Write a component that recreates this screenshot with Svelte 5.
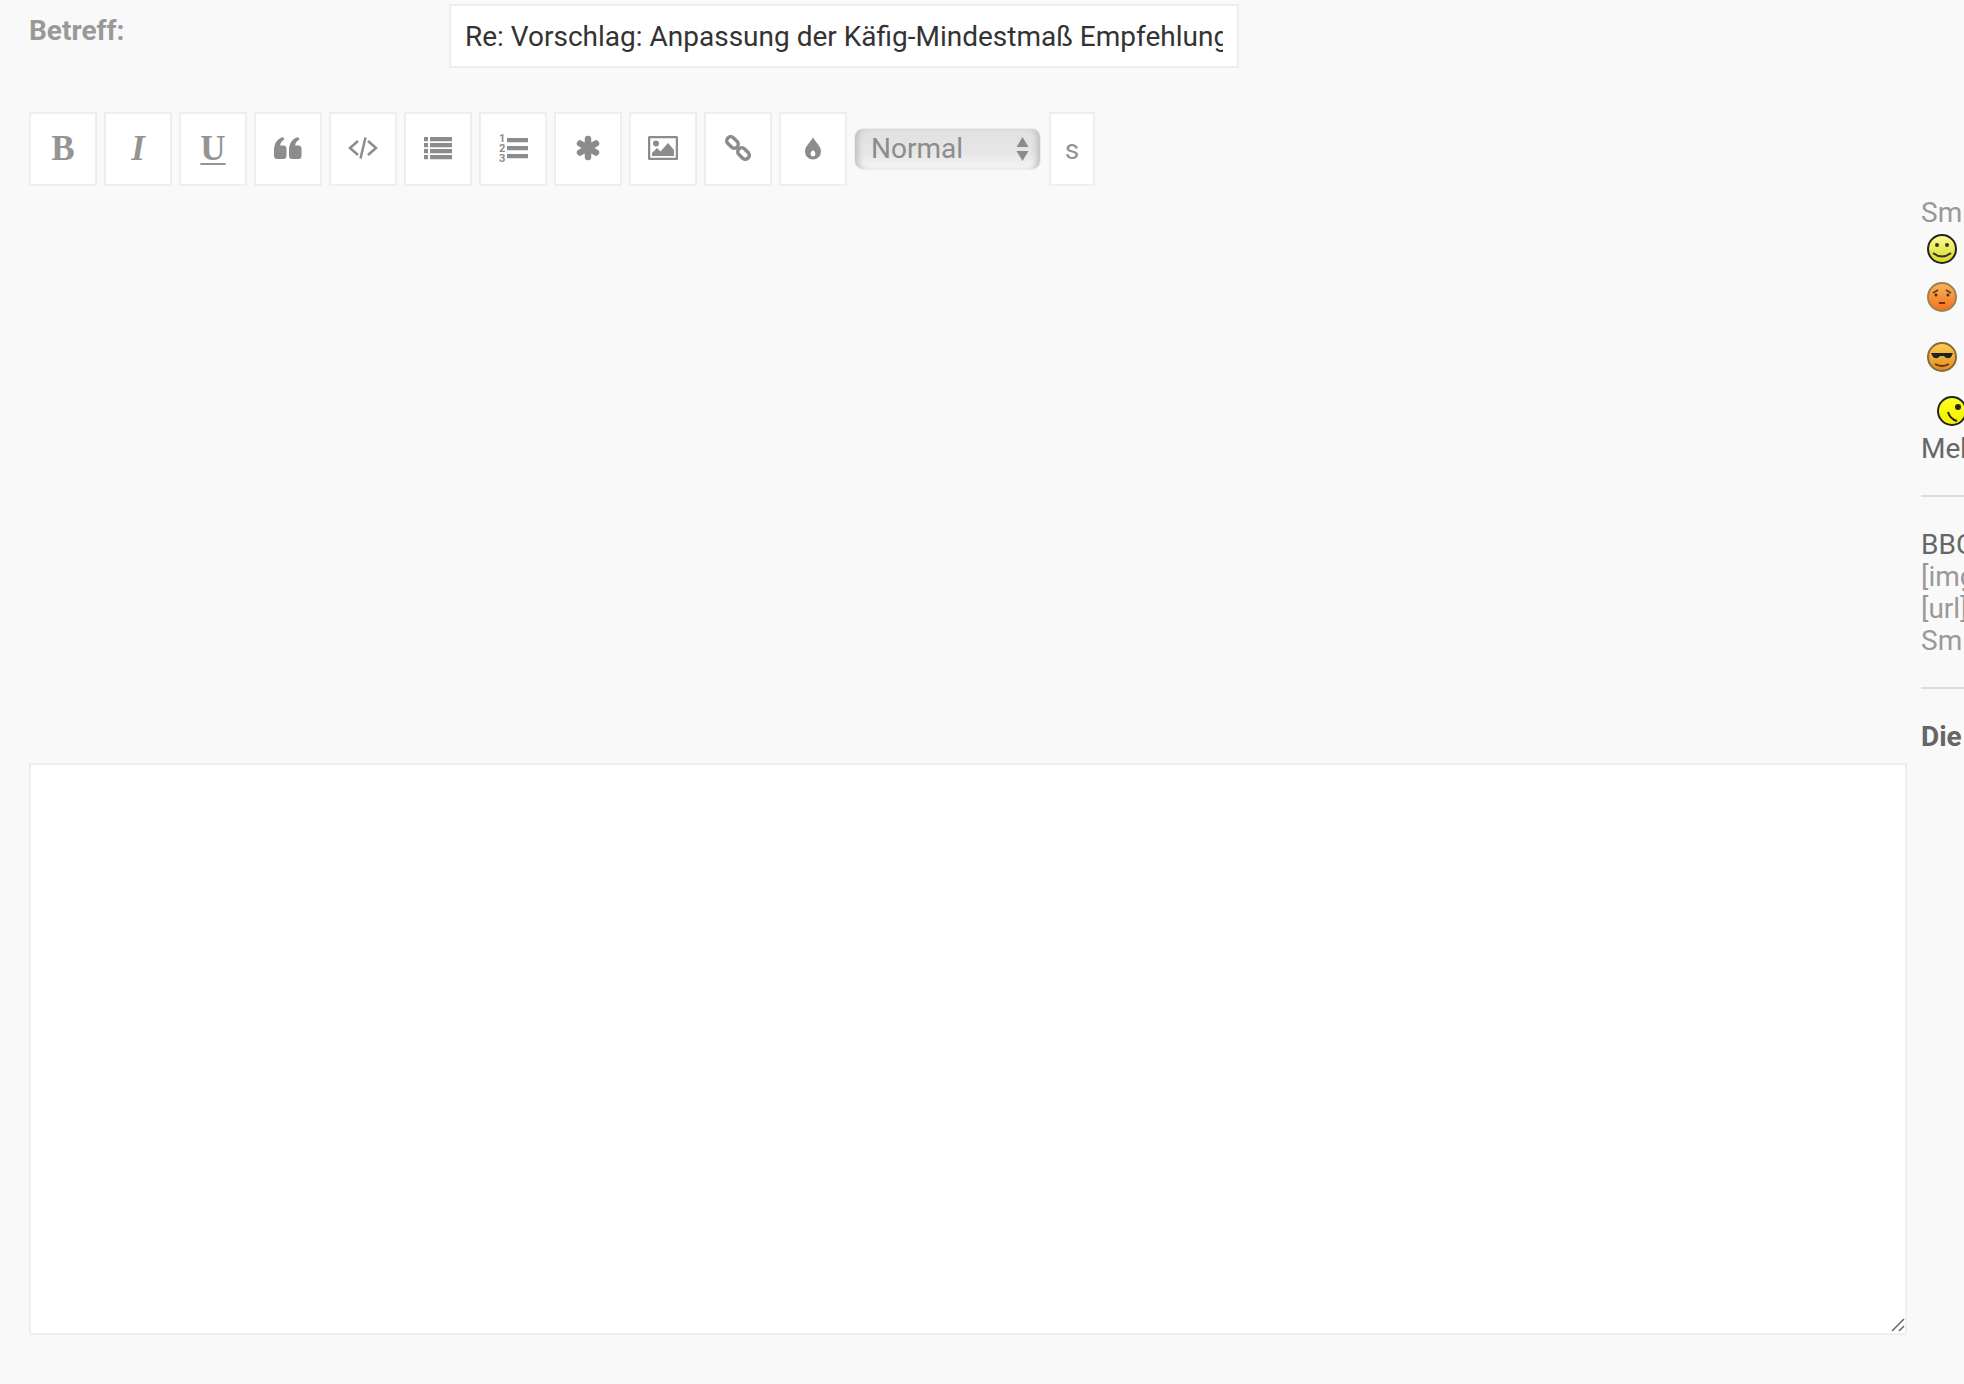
<script>
  let subject = "Re: Vorschlag: Anpassung der Käfig-Mindestmaß Empfehlung";
  let size = "Normal";
  const smilies = [
    { id: "smile", top: "#fdfd9a", bottom: "#d8d820", line: "#222" },
    { id: "sad", top: "#fdb45a", bottom: "#f0701a", line: "#a08050" },
    { id: "cool", top: "#fdd050", bottom: "#e08a20", line: "#8a6a3a" },
    { id: "lol", top: "#ffff20", bottom: "#f0f000", line: "#222" }
  ];
</script>

<div class="page">
  <div class="main">
    <div class="subject-row">
      <label class="subject-label" for="subject">Betreff:</label>
      <input id="subject" class="subject" type="text" bind:value={subject} />
    </div>

    <div class="toolbar">
      <button type="button" class="tool serif bold">B</button>
      <button type="button" class="tool serif italic">I</button>
      <button type="button" class="tool serif underline">U</button>
      <button type="button" class="tool" aria-label="Zitat">
        <svg width="28" height="24" viewBox="0 0 28 24"><path d="M0 14.500C0 7 3.500 2.500 9 1l1.500 2.500C7.500 5 6.300 7 6.200 9.500H9.500c1.700 0 3 1.300 3 3V20c0 1.700-1.300 3-3 3H3c-1.700 0-3-1.300-3-3zM15 14.500C15 7 18.500 2.500 24 1l1.500 2.500C22.500 5 21.300 7 21.200 9.500H24.500c1.700 0 3 1.300 3 3V20c0 1.700-1.300 3-3 3H18c-1.700 0-3-1.300-3-3z" /></svg>
      </button>
      <button type="button" class="tool" aria-label="Code">
        <svg width="30" height="24" viewBox="0 0 30 24"><path class="line" d="M10 5 2 12l8 7M20 5l8 7-8 7M17.500 1.500 12.500 22.500" /></svg>
      </button>
      <button type="button" class="tool" aria-label="Liste">
        <svg width="28" height="24" viewBox="0 0 28 24"><path d="M0 1h4v4.300H0zM6 1h22v4.300H6zM0 7h4v4.300H0zM6 7h22v4.300H6zM0 13h4v4.300H0zM6 13h22v4.300H6zM0 19h4v4.300H0zM6 19h22v4.300H6z" /></svg>
      </button>
      <button type="button" class="tool" aria-label="Nummerierte Liste">
        <svg width="30" height="30" viewBox="0 0 30 30"><text x="1" y="9" class="num">1</text><text x="1" y="19" class="num">2</text><text x="1" y="29" class="num">3</text><path d="M9 5h21v4.300H9zM9 13h21v4.300H9zM9 21h21v4.300H9z" /></svg>
      </button>
      <button type="button" class="tool" aria-label="Listenpunkt">
        <svg width="24" height="26" viewBox="0 0 24 26"><path class="star" d="M12 4v18M4 8.500l16 9M20 8.500l-16 9" /></svg>
      </button>
      <button type="button" class="tool" aria-label="Bild">
        <svg width="30" height="24" viewBox="0 0 30 24"><rect class="frame" x="1" y="1" width="28" height="22" rx="1.500" /><circle cx="8" cy="7.500" r="3" /><path d="M4 20v-3l5-5 3.500 3.500L20 7l6 7v6z" /></svg>
      </button>
      <button type="button" class="tool" aria-label="Link">
        <svg width="26" height="26" viewBox="0 0 26 26"><g class="chain"><rect x="1" y="3.500" width="13" height="8" rx="4" transform="rotate(45 7.500 7.500)" /><rect x="12" y="14.500" width="13" height="8" rx="4" transform="rotate(45 18.500 18.500)" /></g></svg>
      </button>
      <button type="button" class="tool" aria-label="Farbe">
        <svg width="18" height="24" viewBox="0 0 18 24"><path fill-rule="evenodd" d="M9 1c1.500 4.500 8 8.500 8 14.500a8 8 0 0 1-16 0C1 9.500 7.500 5.500 9 1zM9 14c-1.500 1.500-2.500 2.500-2.500 4a2.500 2.500 0 0 0 5 0c0-1.500-1-2.500-2.500-4z" /></svg>
      </button>
      <div class="select-wrap">
        <select class="size" bind:value={size}>
          <option>Klein</option>
          <option>Normal</option>
          <option>Groß</option>
        </select>
        <svg class="arrows" width="13" height="26" viewBox="0 0 13 26"><path d="M6.500 1l6 10H.5zM.5 15h12L6.500 25z" /></svg>
      </div>
      <button type="button" class="tool text-tool">s</button>
    </div>

    <div class="message-wrap">
      <textarea class="message"></textarea>
      <svg class="grip" width="14" height="14" viewBox="0 0 14 14"><path d="M1 13 13 1M8 13l5-5" /></svg>
    </div>
  </div>

  <aside class="side">
    <div class="muted">Smilies</div>
    <div class="smilies">
      {#each smilies as s}
        <svg class="smiley {s.id}" width="32" height="32" viewBox="0 0 32 32">
          <defs>
            <linearGradient id={s.id} x1="0" y1="0" x2="0" y2="1">
              <stop offset="0" stop-color={s.top} />
              <stop offset="1" stop-color={s.bottom} />
            </linearGradient>
          </defs>
          <circle cx="16" cy="16" r="14" fill="url(#{s.id})" stroke={s.line} stroke-width="2" />
          {#if s.id === "smile"}
            <circle cx="11" cy="12" r="2" fill="#333" />
            <circle cx="21" cy="12" r="2" fill="#333" />
            <path d="M7 20q9 7 18 0" fill="none" stroke="#333" stroke-width="2" />
          {:else if s.id === "sad"}
            <path d="M7 12l5-3M25 12l-5-3" stroke="#6a4020" stroke-width="2" />
            <circle cx="10" cy="14" r="1.500" fill="#333" />
            <circle cx="22" cy="14" r="1.500" fill="#333" />
            <path d="M13 22h6" stroke="#6a3010" stroke-width="2" />
          {:else if s.id === "cool"}
            <path d="M5 12h22l-2 4q-4 3-7-1h-4q-3 4-7 1z" fill="#222" />
            <path d="M9 23q7 4 14 0" fill="none" stroke="#6a3010" stroke-width="2" />
          {:else}
            <circle cx="22" cy="12" r="3" fill="#222" />
            <path d="M12 17q2 7 9 9" fill="none" stroke="#222" stroke-width="2" />
          {/if}
        </svg>
      {/each}
    </div>
    <div class="dark">Mehr Smilies</div>
    <hr />
    <div class="dark">BBCode ist eingeschaltet</div>
    <div class="muted">[img] ist eingeschaltet</div>
    <div class="muted">[url] ist eingeschaltet</div>
    <div class="muted">Smilies sind eingeschaltet</div>
    <hr />
    <div class="dark strong">Die Vorschau ist deaktiviert</div>
  </aside>
</div>

<style>
  :global(body) {
    margin: 0;
    background: #f9f9f9;
  }

  .page {
    display: flex;
    height: 1384px;
    width: 1964px;
    overflow: hidden;
    font-family: Roboto, "Liberation Sans", sans-serif;
    font-size: 28px;
    line-height: 32px;
    box-sizing: border-box;
    padding-left: 29px;
  }

  .main {
    width: 1878px;
    flex: none;
    display: flex;
    flex-direction: column;
  }

  .subject-row {
    display: flex;
    align-items: flex-start;
    padding-top: 4px;
  }

  .subject-label {
    width: 420px;
    font-weight: 700;
    color: #999;
    line-height: 54px;
  }

  .subject {
    width: 790px;
    height: 64px;
    box-sizing: border-box;
    border: 2px solid #eee;
    background: #fff;
    padding: 0 14px;
    font-family: inherit;
    font-size: 28px;
    color: #333;
    outline: none;
  }

  .toolbar {
    display: flex;
    align-items: center;
    gap: 7px;
    margin-top: 44px;
  }

  .tool {
    width: 68px;
    height: 74px;
    box-sizing: border-box;
    border: 2px solid #eee;
    background: #fff;
    padding: 0;
    display: flex;
    align-items: center;
    justify-content: center;
    color: #949494;
    fill: #8c8c8c;
    font-size: 35px;
  }

  .tool svg {
    margin-bottom: 3px;
  }

  .serif {
    font-family: "Liberation Serif", serif;
  }

  .bold {
    font-weight: 700;
  }

  .italic {
    font-style: italic;
    font-weight: 700;
  }

  .underline {
    font-weight: 700;
    text-decoration: underline;
    text-decoration-thickness: 2px;
    text-underline-offset: 3px;
  }

  .text-tool {
    width: 46px;
    margin-left: 1px;
    font-family: inherit;
    font-size: 28px;
  }

  .line {
    fill: none;
    stroke: #8c8c8c;
    stroke-width: 2.500;
  }

  .star {
    fill: none;
    stroke: #8c8c8c;
    stroke-width: 6.500;
    stroke-linecap: round;
  }

  .frame {
    fill: none;
    stroke: #8c8c8c;
    stroke-width: 2.500;
  }

  .chain {
    fill: none;
    stroke: #8c8c8c;
    stroke-width: 3.500;
  }

  .num {
    font-family: Roboto, sans-serif;
    font-size: 11px;
    font-weight: 700;
    fill: #8c8c8c;
  }

  .select-wrap {
    position: relative;
    width: 187px;
    height: 42px;
  }

  .size {
    appearance: none;
    width: 100%;
    height: 100%;
    border: 1px solid #ececec;
    border-radius: 9px;
    padding: 0 0 2px 16px;
    font-family: inherit;
    font-size: 28px;
    color: #8c8c8c;
    background: linear-gradient(#e0e0e0, #e6e6e6 60%, #f5f5f5);
    box-shadow: inset 7px 0 6px -4px #bdbdbd, inset -7px 0 6px -4px #bdbdbd;
    outline: none;
  }

  .arrows {
    position: absolute;
    right: 12px;
    top: 8px;
    fill: #8c8c8c;
    pointer-events: none;
  }

  .message-wrap {
    position: relative;
    margin-top: 577px;
    height: 572px;
  }

  .message {
    display: block;
    width: 1878px;
    height: 572px;
    box-sizing: border-box;
    border: 2px solid #eee;
    background: #fff;
    outline: none;
  }

  .message::-webkit-resizer {
    background: transparent;
  }

  .grip {
    position: absolute;
    right: 2px;
    bottom: 3px;
    fill: none;
    stroke: #666;
    stroke-width: 1.500;
    pointer-events: none;
  }

  .side {
    flex: none;
    width: 400px;
    margin-left: 14px;
    padding-top: 197px;
    white-space: nowrap;
  }

  .muted {
    color: #999;
  }

  .dark {
    color: #666;
  }

  .strong {
    font-weight: 700;
  }

  .smilies {
    display: flex;
    flex-direction: column;
    align-items: flex-start;
    gap: 16px;
    margin-top: 4px;
    margin-bottom: 6px;
    padding-left: 5px;
  }

  .smiley {
    display: block;
  }

  .cool {
    margin-top: 12px;
  }

  .lol {
    margin-top: 6px;
    margin-left: 10px;
  }

  hr {
    border: none;
    border-top: 2px solid #ddd;
    margin: 30px 0 32px;
  }
</style>
